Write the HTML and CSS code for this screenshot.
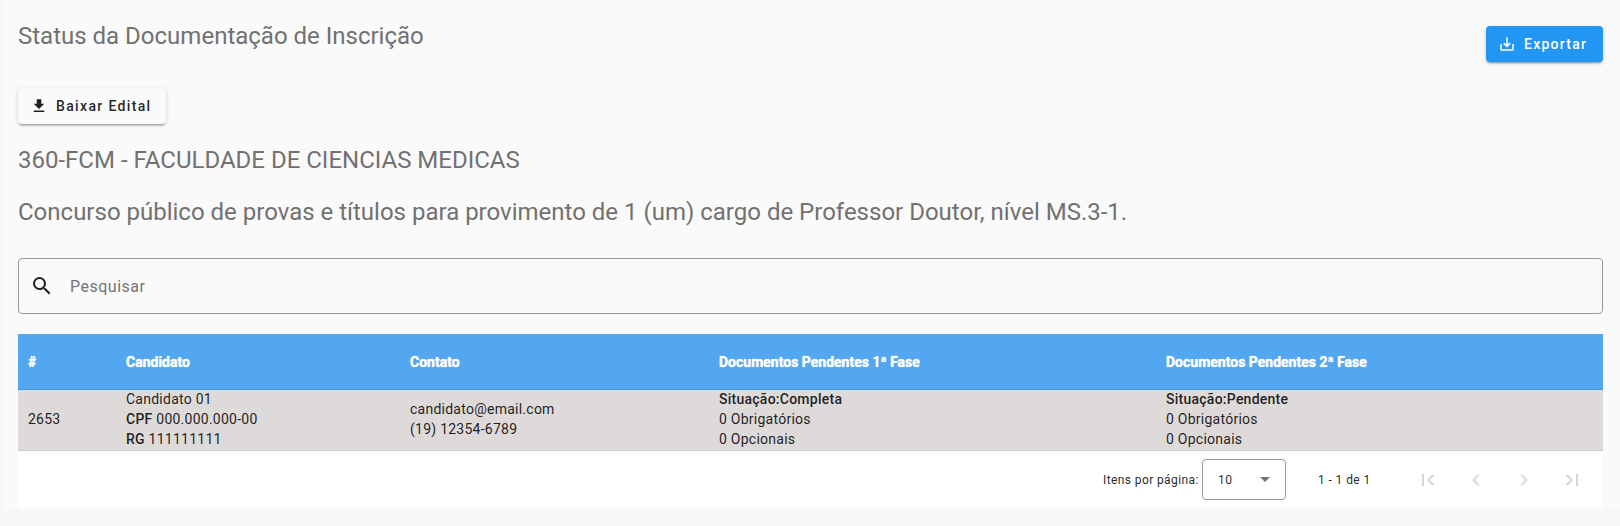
FILE: index.html
```html
<!DOCTYPE html>
<html lang="pt-BR">
<head>
<meta charset="utf-8">
<title>Status da Documentação de Inscrição</title>
<link rel="stylesheet" href="styles.css">
</head>
<body>
<main class="page">
  <div class="top">
    <h1 class="title">Status da Documentação de Inscrição</h1>
    <button class="btn btn-primary" type="button">
      <svg class="ico" viewBox="0 0 24 24"><path fill="currentColor" d="M19 12v7H5v-7H3v7c0 1.1.9 2 2 2h14c1.1 0 2-.9 2-2v-7h-2zm-6 .67l2.59-2.58L17 11.5l-5 5-5-5 1.41-1.41L11 12.67V3h2v9.67z"/></svg>
      <span>Exportar</span>
    </button>
  </div>
  <button class="btn btn-plain" type="button">
    <svg class="ico" viewBox="0 0 24 24"><path fill="currentColor" d="M19 9h-4V3H9v6H5l7 7 7-7zM5 18v2h14v-2H5z"/></svg>
    <span>Baixar Edital</span>
  </button>
  <h2 class="sub unit">360-FCM - FACULDADE DE CIENCIAS MEDICAS</h2>
  <h2 class="sub desc">Concurso público de provas e títulos para provimento de 1 (um) cargo de Professor Doutor, nível MS.3-1.</h2>
  <div class="search">
    <svg class="search-ico" viewBox="0 0 24 24"><path fill="currentColor" d="M15.5 14h-.79l-.28-.27A6.47 6.47 0 0 0 16 9.5 6.5 6.5 0 1 0 9.5 16c1.61 0 3.09-.59 4.23-1.57l.27.28v.79l5 4.99L20.49 19l-4.99-5zm-6 0C7.01 14 5 11.99 5 9.5S7.01 5 9.5 5 14 7.01 14 9.5 11.99 14 9.5 14z"/></svg>
    <span class="placeholder">Pesquisar</span>
  </div>
  <section class="card">
    <table class="grid">
      <thead>
        <tr>
          <th class="c1">#</th>
          <th class="c2">Candidato</th>
          <th class="c3">Contato</th>
          <th class="c4">Documentos Pendentes 1ª Fase</th>
          <th class="c5">Documentos Pendentes 2ª Fase</th>
        </tr>
      </thead>
      <tbody>
        <tr>
          <td><div class="cell">2653</div></td>
          <td><div class="cell">Candidato 01<br><span class="b">CPF</span> 000.000.000-00<br><span class="b">RG</span> 111111111</div></td>
          <td><div class="cell">candidato@email.com<br>(19) 12354-6789</div></td>
          <td><div class="cell"><span class="b">Situação:Completa</span><br>0 Obrigatórios<br>0 Opcionais</div></td>
          <td><div class="cell"><span class="b">Situação:Pendente</span><br>0 Obrigatórios<br>0 Opcionais</div></td>
        </tr>
      </tbody>
    </table>
    <div class="pager">
      <span class="pager-label">Itens por página:</span>
      <div class="select"><span>10</span><i class="caret"></i></div>
      <span class="range">1 - 1 de 1</span>
      <div class="nav">
        <svg viewBox="0 0 24 24"><path fill="currentColor" d="M18.41 16.59L13.82 12l4.59-4.59L17 6l-6 6 6 6zM6 6h2v12H6z"/></svg>
        <svg viewBox="0 0 24 24"><path fill="currentColor" d="M15.41 7.41L14 6l-6 6 6 6 1.41-1.41L10.83 12z"/></svg>
        <svg viewBox="0 0 24 24"><path fill="currentColor" d="M10 6L8.59 7.41 13.17 12l-4.58 4.59L10 18l6-6z"/></svg>
        <svg viewBox="0 0 24 24"><path fill="currentColor" d="M5.59 7.41L10.18 12l-4.59 4.59L7 18l6-6-6-6zM16 6h2v12h-2z"/></svg>
      </div>
    </div>
  </section>
</main>
</body>
</html>
```
FILE: styles.css
```css
* { box-sizing: border-box; }
html, body { margin: 0; padding: 0; }
body {
  background: #f6f6f6;
  font-family: Roboto, "Liberation Sans", sans-serif;
  color: rgba(0,0,0,.87);
  height: 526px;
  overflow: hidden;
}
.page { margin-left: 3px; padding: 0 17px 0 15px; height: 510px; background: #fafafa; }
.top { display: flex; justify-content: space-between; align-items: flex-start; height: 88px; }
.title { margin: 21px 0 0; font-size: 24px; line-height: 30px; font-weight: 400; color: #717171; }
.btn {
  display: inline-flex; align-items: center; height: 36px; border: 0; border-radius: 4px;
  font-family: inherit; font-size: 14px; font-weight: 500; letter-spacing: 1.25px; padding: 0;
}
.ico { width: 18px; height: 18px; margin-right: 8px; }
.btn-primary {
  width: 117px; margin-top: 26px; padding-left: 12px; background: #2196f3; color: #fff;
  box-shadow: 0 3px 1px -2px rgba(0,0,0,.2), 0 2px 2px rgba(0,0,0,.14), 0 1px 5px rgba(0,0,0,.12);
}
.btn-plain {
  width: 148px; padding-left: 12px; background: #fafafa; color: rgba(0,0,0,.87); display: flex;
  letter-spacing: 1.35px;
  box-shadow: 0 3px 1px -2px rgba(0,0,0,.2), 0 2px 2px rgba(0,0,0,.14), 0 1px 5px rgba(0,0,0,.12);
}
.sub { margin: 0; font-weight: 400; font-size: 24px; line-height: 32px; color: #717171; }
.unit { margin-top: 20px; }
.desc { margin-top: 20px; }
.search {
  display: flex; align-items: center; height: 56px; margin-top: 30px; padding-left: 11px;
  border: 1px solid #9a9a9a; border-radius: 4px;
}
.search-ico { width: 24px; height: 24px; color: rgba(0,0,0,.87); }
.placeholder { margin-left: 16px; font-size: 16px; letter-spacing: .5px; color: #757575; }
.card { margin-top: 20px; background: #fff; height: 174px; border-radius: 0 0 4px 4px; overflow: hidden; }
.grid { width: 100%; border-collapse: separate; border-spacing: 0; table-layout: fixed; font-size: 14px; }
.grid th {
  height: 56px; padding: 0 0 0 10px; text-align: left; background: #52a7f0; color: #fff;
  font-weight: 700; font-size: 14px; text-shadow: 0 0 1px #fff;
  border-bottom: 1px solid #4a97d8;
}
.c1 { width: 98px; } .c2 { width: 284px; } .c3 { width: 309px; } .c4 { width: 447px; }
.grid td {
  height: 61px; padding: 0 0 0 10px; background: #dedada; line-height: 20px; letter-spacing: .25px;
  color: rgba(0,0,0,.87); border-bottom: 1px solid #cfcccc;
}
.cell { margin-top: -2px; }
.b { font-weight: 500; letter-spacing: .25px; }
.pager { display: flex; align-items: center; height: 57px; padding-left: 1085px; font-size: 12px; letter-spacing: .4px; }
.pager-label { width: 99px; }
.select {
  display: flex; align-items: center; justify-content: space-between; width: 84px; height: 41px;
  padding: 0 15px 0 15px; border: 1px solid #9a9a9a; border-radius: 4px; font-size: 12px;
}
.caret { width: 0; height: 0; border-left: 5px solid transparent; border-right: 5px solid transparent; border-top: 5px solid #757575; }
.range { margin-left: 32px; width: 98px; font-size: 12px; }
.nav { display: flex; gap: 24px; color: rgba(0,0,0,.16); }
.nav svg { width: 24px; height: 24px; display: block; }
```
